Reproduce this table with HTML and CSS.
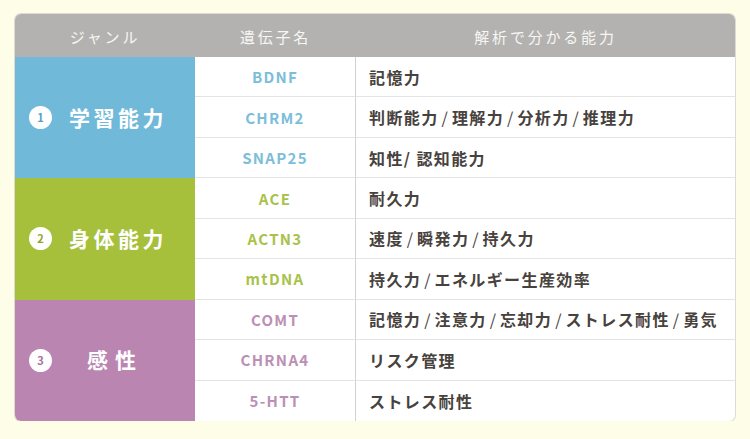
FILE: index.html
```html
<!DOCTYPE html>
<html lang="ja">
<head>
<meta charset="utf-8">
<link rel="stylesheet" href="styles.css">
</head>
<body>
<div class="table">
  <div class="hd">ジャンル</div>
  <div class="hd">遺伝子名</div>
  <div class="hd">解析で分かる能力</div>

  <div class="group g1"><span class="num">1</span><span class="gname">学習能力</span></div>
  <div class="gene c1">BDNF</div><div class="ab">記憶力</div>
  <div class="gene c1">CHRM2</div><div class="ab">判断能力<i>/</i>理解力<i>/</i>分析力<i>/</i>推理力</div>
  <div class="gene c1">SNAP25</div><div class="ab">知性/ 認知能力</div>

  <div class="group g2"><span class="num">2</span><span class="gname">身体能力</span></div>
  <div class="gene c2">ACE</div><div class="ab">耐久力</div>
  <div class="gene c2">ACTN3</div><div class="ab">速度<i>/</i>瞬発力<i>/</i>持久力</div>
  <div class="gene c2">mtDNA</div><div class="ab">持久力<i>/</i>エネルギー生産効率</div>

  <div class="group g3"><span class="num">3</span><span class="gname wide">感性</span></div>
  <div class="gene c3">COMT</div><div class="ab">記憶力<i>/</i>注意力<i>/</i>忘却力<i>/</i>ストレス耐性<i>/</i>勇気</div>
  <div class="gene c3">CHRNA4</div><div class="ab">リスク管理</div>
  <div class="gene c3 last">5-HTT</div><div class="ab last">ストレス耐性</div>
</div>
</body>
</html>
```
FILE: styles.css
```css
html, body {
  margin: 0;
  padding: 0;
  background: #fefde7;
}
body {
  padding: 14px 15px 0 15px;
  font-family: "Noto Sans CJK JP", "Noto Sans", sans-serif;
}
.table {
  width: 720px;
  height: 407px;
  box-sizing: border-box;
  display: grid;
  grid-template-columns: 180px 161px 1fr;
  grid-template-rows: 43px repeat(9, 1fr);
  border-radius: 6px;
  overflow: hidden;
  background: #fff;
  box-shadow: 0 0 0 1px #dedcd2;
}
.hd {
  background: #b4b2b0;
  color: #f7f6f4;
  font-size: 15px;
  letter-spacing: 2.8px;
  display: flex;
  align-items: center;
  justify-content: center;
  padding-top: 1px;
}
.group {
  grid-row: span 3;
  display: flex;
  align-items: center;
  padding-left: 14px;
  color: #fff;
}
.g1 { background: #70b9d9; }
.g2 { background: #a6c03b; }
.g3 { background: #bb85b1; }
.num {
  width: 23px;
  height: 23px;
  border-radius: 50%;
  background: #fff;
  display: flex;
  align-items: center;
  justify-content: center;
  font-size: 11px;
  font-weight: 700;
  margin-right: 17px;
  line-height: 1;
}
.g1 .num { color: #5a9fbd; }
.g2 .num { color: #8ea62c; }
.g3 .num { color: #a7709d; }
.gname {
  font-size: 21px;
  font-weight: 700;
  letter-spacing: 3.5px;
  margin-top: -2px;
}
.gname.wide {
  letter-spacing: 7px;
  margin-left: 18px;
}
.gene {
  display: flex;
  align-items: center;
  justify-content: center;
  font-size: 15px;
  font-weight: 700;
  letter-spacing: 1.3px;
  border-bottom: 1px solid #e4e4e4;
  border-right: 1px solid #d2d2d2;
}
.c1 { color: #7cbed9; }
.c2 { color: #a9c24b; }
.c3 { color: #bb90b5; }
.ab {
  display: flex;
  align-items: center;
  padding-left: 13px;
  font-size: 16px;
  font-weight: 700;
  letter-spacing: 1.4px;
  color: #47423d;
  border-bottom: 1px solid #e4e4e4;
}
.ab i {
  font-style: normal;
  font-weight: 400;
  margin: 0 4px 0 3px;
  letter-spacing: 0;
}
.last { border-bottom: none; }
```
